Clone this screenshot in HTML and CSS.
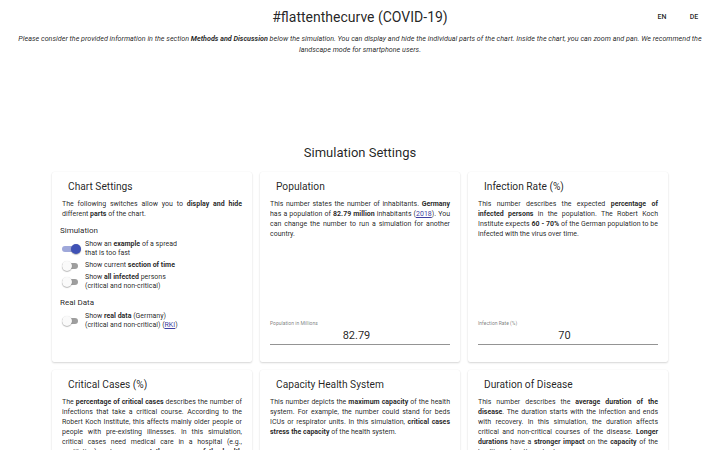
FILE: index.html
```
<!DOCTYPE html>
<html lang="en">
<head>
    <meta charset="UTF-8">
    <meta name="viewport" content="width=device-width, initial-scale=1.0">
    <title>#flattenthecurve (COVID-19)</title>
    <link rel="stylesheet" href="styles.css">
</head>
<body>

    <!-- header -->
    <div class="top-bar">
        <div></div>
        <h1 class="page-title">#flattenthecurve (COVID-19)</h1>
        <div class="lang-buttons">
            <button class="lang-button">EN</button>
            <button class="lang-button">DE</button>
        </div>
    </div>
    <p class="intro">Please consider the provided information in the section <b>Methods and Discussion</b> below the simulation. You can display and hide the individual parts of the chart. Inside the chart, you can zoom and pan. We recommend the landscape mode for smartphone users.</p>

    <!-- chart placeholder -->
    <div class="chart-area"></div>

    <h2 class="section-title">Simulation Settings</h2>

    <div class="settings-grid">
        <div class="card">
            <h3 class="card-title">Chart Settings</h3>
            <p class="card-text">The following switches allow you to <b>display and hide</b> different <b>parts</b> of the chart.</p>
            <div class="group-label">Simulation</div>
            <div class="switch-row">
                <span class="switch on"><span class="thumb"></span></span>
                <span class="switch-label">Show an <b>example</b> of a spread<br>that is too fast</span>
            </div>
            <div class="switch-row">
                <span class="switch"><span class="thumb"></span></span>
                <span class="switch-label">Show current <b>section of time</b></span>
            </div>
            <div class="switch-row">
                <span class="switch"><span class="thumb"></span></span>
                <span class="switch-label">Show <b>all infected</b> persons<br>(critical and non-critical)</span>
            </div>
            <div class="group-label">Real Data</div>
            <div class="switch-row">
                <span class="switch"><span class="thumb"></span></span>
                <span class="switch-label">Show <b>real data</b> (Germany)<br>(critical and non-critical) (<a href="#">RKI</a>)</span>
            </div>
        </div>

        <div class="card">
            <h3 class="card-title">Population</h3>
            <p class="card-text">This number states the number of inhabitants. <b>Germany</b> has a population of <b>82.79 million</b> inhabitants (<a href="#">2018</a>). You can change the number to run a simulation for another country.</p>
            <div class="field">
                <label class="field-label">Population in Millions</label>
                <input class="field-input" type="text" value="82.79">
            </div>
        </div>

        <div class="card">
            <h3 class="card-title">Infection Rate (%)</h3>
            <p class="card-text">This number describes the expected <b>percentage of infected persons</b> in the population. The Robert Koch Institute expects <b>60 - 70%</b> of the German population to be infected with the virus over time.</p>
            <div class="field">
                <label class="field-label">Infection Rate (%)</label>
                <input class="field-input" type="text" value="70">
            </div>
        </div>

        <div class="card">
            <h3 class="card-title">Critical Cases (%)</h3>
            <p class="card-text">The <b>percentage of critical cases</b> describes the number of infections that take a critical course. According to the Robert Koch Institute, this affects mainly older people or people with pre-existing illnesses. In this simulation, critical cases need medical care in a hospital (e.g., ventilation) and progress <b>at the expense of the health system</b>.</p>
        </div>

        <div class="card">
            <h3 class="card-title">Capacity Health System</h3>
            <p class="card-text">This number depicts the <b>maximum capacity</b> of the health system. For example, the number could stand for beds ICUs or respirator units. In this simulation, <b>critical cases stress the capacity</b> of the health system.</p>
        </div>

        <div class="card">
            <h3 class="card-title">Duration of Disease</h3>
            <p class="card-text">This number describes the <b>average duration of the disease</b>. The duration starts with the infection and ends with recovery. In this simulation, the duration affects critical and non-critical courses of the disease. <b>Longer durations</b> have a <b>stronger impact</b> on the <b>capacity</b> of the health system than shorter ones.</p>
        </div>
    </div>

</body>
</html>
```

FILE: styles.css
```
body {
    margin: 0;
    font-family: Roboto, "Liberation Sans", sans-serif;
    color: rgba(0, 0, 0, 0.87);
    background-color: white;
}

/* header */
.top-bar {
    display: grid;
    grid-template-columns: 1fr auto 1fr;
    align-items: center;
    padding-top: 7px;
}
.page-title {
    margin: 0;
    font-size: 14px;
    font-weight: 400;
    line-height: 20px;
}
.lang-buttons {
    display: flex;
    justify-content: flex-end;
    padding-right: 10px;
}
.lang-button {
    min-width: 32px;
    padding: 3px 4px;
    border: none;
    background: none;
    font-family: inherit;
    font-size: 7px;
    font-weight: 500;
    color: rgba(0, 0, 0, 0.87);
    text-transform: uppercase;
    cursor: pointer;
}
.intro {
    margin: 7px 14px 0;
    font-size: 7.2px;
    line-height: 10.5px;
    font-style: italic;
    text-align: center;
}

.chart-area {
    height: 90px;
}

.section-title {
    margin: 0;
    font-size: 13px;
    font-weight: 400;
    line-height: 16px;
    text-align: center;
}

/* cards */
.settings-grid {
    display: grid;
    grid-template-columns: repeat(3, 200px);
    grid-template-rows: 190px 190px;
    gap: 8px;
    justify-content: center;
    margin-top: 11px;
}
.card {
    display: flex;
    flex-direction: column;
    padding: 8px 10px 17px;
    border-radius: 2px;
    background-color: white;
    box-shadow: 0 1px 2px rgba(0, 0, 0, 0.16), 0 0 1px rgba(0, 0, 0, 0.08);
}
.card-title {
    margin: 0 0 5px 6px;
    font-size: 10.2px;
    font-weight: 400;
    line-height: 14px;
}
.card-text {
    margin: 0;
    font-size: 7px;
    line-height: 10px;
    text-align: justify;
}
.card-text a,
.switch-label a {
    color: #3f3fa0;
}

.group-label {
    margin: 6px 0 4px -2px;
    font-size: 8px;
    line-height: 11px;
}

/* switches */
.switch-row {
    display: flex;
    align-items: center;
    gap: 4px;
    min-height: 15px;
}
.switch {
    position: relative;
    flex: none;
    width: 16px;
    height: 6px;
    margin-right: 3px;
    border-radius: 3px;
    background-color: rgba(0, 0, 0, 0.38);
}
.switch .thumb {
    position: absolute;
    top: -2px;
    left: 0;
    width: 10px;
    height: 10px;
    border-radius: 50%;
    background-color: #fafafa;
    box-shadow: 0 1px 1px rgba(0, 0, 0, 0.25), 0 0 1px rgba(0, 0, 0, 0.15);
}
.switch.on {
    background-color: #9fa8da;
}
.switch.on .thumb {
    left: 9px;
    background-color: #3f51b5;
}
.switch-label {
    font-size: 7px;
    line-height: 9px;
}

/* number fields */
.field {
    display: flex;
    flex-direction: column;
    margin-top: auto;
}
.field-label {
    margin-bottom: 3px;
    font-size: 5px;
    line-height: 6px;
    color: rgba(0, 0, 0, 0.54);
}
.field-input {
    padding: 0 7px 2px 0;
    border: none;
    border-bottom: 1px solid rgba(0, 0, 0, 0.42);
    font-family: inherit;
    font-size: 11px;
    color: rgba(0, 0, 0, 0.87);
    text-align: center;
    outline: none;
}
```
